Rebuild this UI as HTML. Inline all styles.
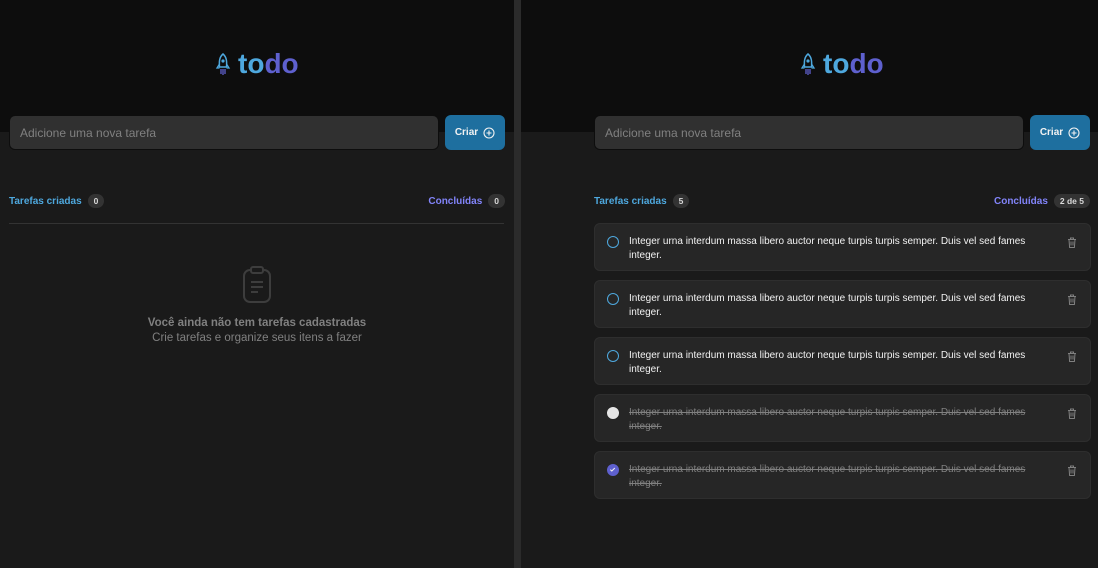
<!DOCTYPE html><html><head><meta charset="utf-8"><style>
*{box-sizing:border-box;margin:0;padding:0}
body{width:1098px;height:568px;background:#1a1a1a;font-family:"Liberation Sans",sans-serif;position:relative;overflow:hidden}
.panel{position:absolute;top:0;height:568px;background:#1a1a1a}
.hdr{position:absolute;left:0;right:0;top:0;height:132px;background:#0d0d0d}
.logo{position:absolute;top:48px;display:flex;align-items:center;gap:6px;font-weight:bold;font-size:28px;letter-spacing:0px}
.logo .t{color:#4ea8de}.logo .d{color:#5e60ce}
.inp{position:absolute;top:115px;height:35px;background:#303030;border:1px solid #0d0d0d;border-radius:6px;color:#808080;font-size:12px;padding:10px 10px}
.btn{position:absolute;top:115px;height:35px;width:60px;background:#1e6f9f;border-radius:6px;color:#f2f2f2;font-size:10px;font-weight:bold;display:flex;align-items:center;justify-content:center;gap:5px}
.stat{position:absolute;top:194px;font-size:10px;font-weight:bold;display:flex;align-items:center;gap:6px}
.badge{background:#333;color:#d9d9d9;border-radius:9px;padding:2px 6px;font-size:8.5px}
.card{position:absolute;left:594px;width:497px;height:48px;background:#262626;border:1px solid #2e2e2e;border-radius:6px}
.card .c{position:absolute;left:12px;top:12px;width:12px;height:12px;border-radius:50%;border:1.5px solid #4ea8de}
.card .tx{position:absolute;left:34px;top:11px;width:405px;font-size:10px;line-height:13.5px;color:#f2f2f2}
.card .tx.done{color:#808080;text-decoration:line-through}
.card svg.tr{position:absolute;left:472px;top:13px}
</style></head><body>
<div class="panel" style="left:0;width:514px">
<div class="hdr"></div>
<div class="logo" style="left:214px"><svg width="18" height="24" viewBox="0 0 18 24"><path d="M9 2C5.5 5 5 9 5.5 15h7C13 9 12.5 5 9 2z" fill="none" stroke="#4ea8de" stroke-width="1.5"/><circle cx="9" cy="9" r="1.6" fill="#4ea8de"/><path d="M5.5 12L3 16h2.5M12.5 12L15 16h-2.5" fill="none" stroke="#4ea8de" stroke-width="1.3"/><path d="M7 17v5M9 17v6M11 17v5" stroke="#5e60ce" stroke-width="1.3"/></svg><span><span class="t">to</span><span class="d">do</span></span></div>
<div class="inp" style="left:9px;width:430px">Adicione uma nova tarefa</div>
<div class="btn" style="left:445px">Criar <svg width="12" height="12" viewBox="0 0 12 12"><circle cx="6" cy="6" r="5" fill="none" stroke="#f2f2f2" stroke-width="1.1"/><path d="M6 3.5v5M3.5 6h5" stroke="#f2f2f2" stroke-width="1.1"/></svg></div>
<div class="stat" style="left:9px;color:#4ea8de">Tarefas criadas <span class="badge">0</span></div>
<div class="stat" style="right:9px;color:#8284fa">Concluídas <span class="badge">0</span></div>
<div style="position:absolute;left:9px;width:495px;top:223px;height:1px;background:#333"></div>
<svg style="position:absolute;left:241px;top:265px" width="32" height="40" viewBox="0 0 32 40"><rect x="3" y="5" width="26" height="32" rx="6" fill="none" stroke="#3d3d3d" stroke-width="2"/><rect x="10" y="2" width="12" height="6" rx="2" fill="#1a1a1a" stroke="#3d3d3d" stroke-width="2"/><path d="M10 17h12M10 22h12M10 27h7" stroke="#3d3d3d" stroke-width="2"/></svg>
<div style="position:absolute;left:0;width:514px;top:316px;text-align:center;color:#808080;font-size:11.5px;line-height:15px"><b>Você ainda não tem tarefas cadastradas</b><br>Crie tarefas e organize seus itens a fazer</div>
</div>
<div style="position:absolute;left:514px;top:0;width:7px;height:568px;background:#2b2b2b"></div>
<div class="panel" style="left:521px;width:577px">
<div class="hdr"></div>
<div class="logo" style="left:278px"><svg width="18" height="24" viewBox="0 0 18 24"><path d="M9 2C5.5 5 5 9 5.5 15h7C13 9 12.5 5 9 2z" fill="none" stroke="#4ea8de" stroke-width="1.5"/><circle cx="9" cy="9" r="1.6" fill="#4ea8de"/><path d="M5.5 12L3 16h2.5M12.5 12L15 16h-2.5" fill="none" stroke="#4ea8de" stroke-width="1.3"/><path d="M7 17v5M9 17v6M11 17v5" stroke="#5e60ce" stroke-width="1.3"/></svg><span><span class="t">to</span><span class="d">do</span></span></div>
<div class="inp" style="left:73px;width:430px">Adicione uma nova tarefa</div>
<div class="btn" style="left:509px">Criar <svg width="12" height="12" viewBox="0 0 12 12"><circle cx="6" cy="6" r="5" fill="none" stroke="#f2f2f2" stroke-width="1.1"/><path d="M6 3.5v5M3.5 6h5" stroke="#f2f2f2" stroke-width="1.1"/></svg></div>
<div class="stat" style="left:73px;color:#4ea8de">Tarefas criadas <span class="badge">5</span></div>
<div class="stat" style="right:8px;color:#8284fa">Concluídas <span class="badge">2 de 5</span></div>
</div>
<div class="card" style="top:223px"><div class="c"></div><div class="tx">Integer urna interdum massa libero auctor neque turpis turpis semper. Duis vel sed fames integer.</div><svg class="tr" width="10" height="11" viewBox="0 0 10 11"><path d="M1 2.5h8M3.5 2.5V1h3v1.5M2 2.5l.6 8h4.8l.6-8M4 4.5v4M6 4.5v4" fill="none" stroke="#808080" stroke-width="1"/></svg></div>
<div class="card" style="top:280px"><div class="c"></div><div class="tx">Integer urna interdum massa libero auctor neque turpis turpis semper. Duis vel sed fames integer.</div><svg class="tr" width="10" height="11" viewBox="0 0 10 11"><path d="M1 2.5h8M3.5 2.5V1h3v1.5M2 2.5l.6 8h4.8l.6-8M4 4.5v4M6 4.5v4" fill="none" stroke="#808080" stroke-width="1"/></svg></div>
<div class="card" style="top:337px"><div class="c"></div><div class="tx">Integer urna interdum massa libero auctor neque turpis turpis semper. Duis vel sed fames integer.</div><svg class="tr" width="10" height="11" viewBox="0 0 10 11"><path d="M1 2.5h8M3.5 2.5V1h3v1.5M2 2.5l.6 8h4.8l.6-8M4 4.5v4M6 4.5v4" fill="none" stroke="#808080" stroke-width="1"/></svg></div>
<div class="card" style="top:394px"><div class="c" style="background:#e6e6e6;border-color:#e6e6e6"></div><div class="tx done">Integer urna interdum massa libero auctor neque turpis turpis semper. Duis vel sed fames integer.</div><svg class="tr" width="10" height="11" viewBox="0 0 10 11"><path d="M1 2.5h8M3.5 2.5V1h3v1.5M2 2.5l.6 8h4.8l.6-8M4 4.5v4M6 4.5v4" fill="none" stroke="#808080" stroke-width="1"/></svg></div>
<div class="card" style="top:451px"><div class="c" style="background:#5e60ce;border-color:#5e60ce"><svg width="9" height="9" viewBox="0 0 9 9" style="position:absolute;left:0;top:0"><path d="M2.3 4.6l1.5 1.4 3-3" fill="none" stroke="#f2f2f2" stroke-width="1"/></svg></div><div class="tx done">Integer urna interdum massa libero auctor neque turpis turpis semper. Duis vel sed fames integer.</div><svg class="tr" width="10" height="11" viewBox="0 0 10 11"><path d="M1 2.5h8M3.5 2.5V1h3v1.5M2 2.5l.6 8h4.8l.6-8M4 4.5v4M6 4.5v4" fill="none" stroke="#808080" stroke-width="1"/></svg></div>
</body></html>
